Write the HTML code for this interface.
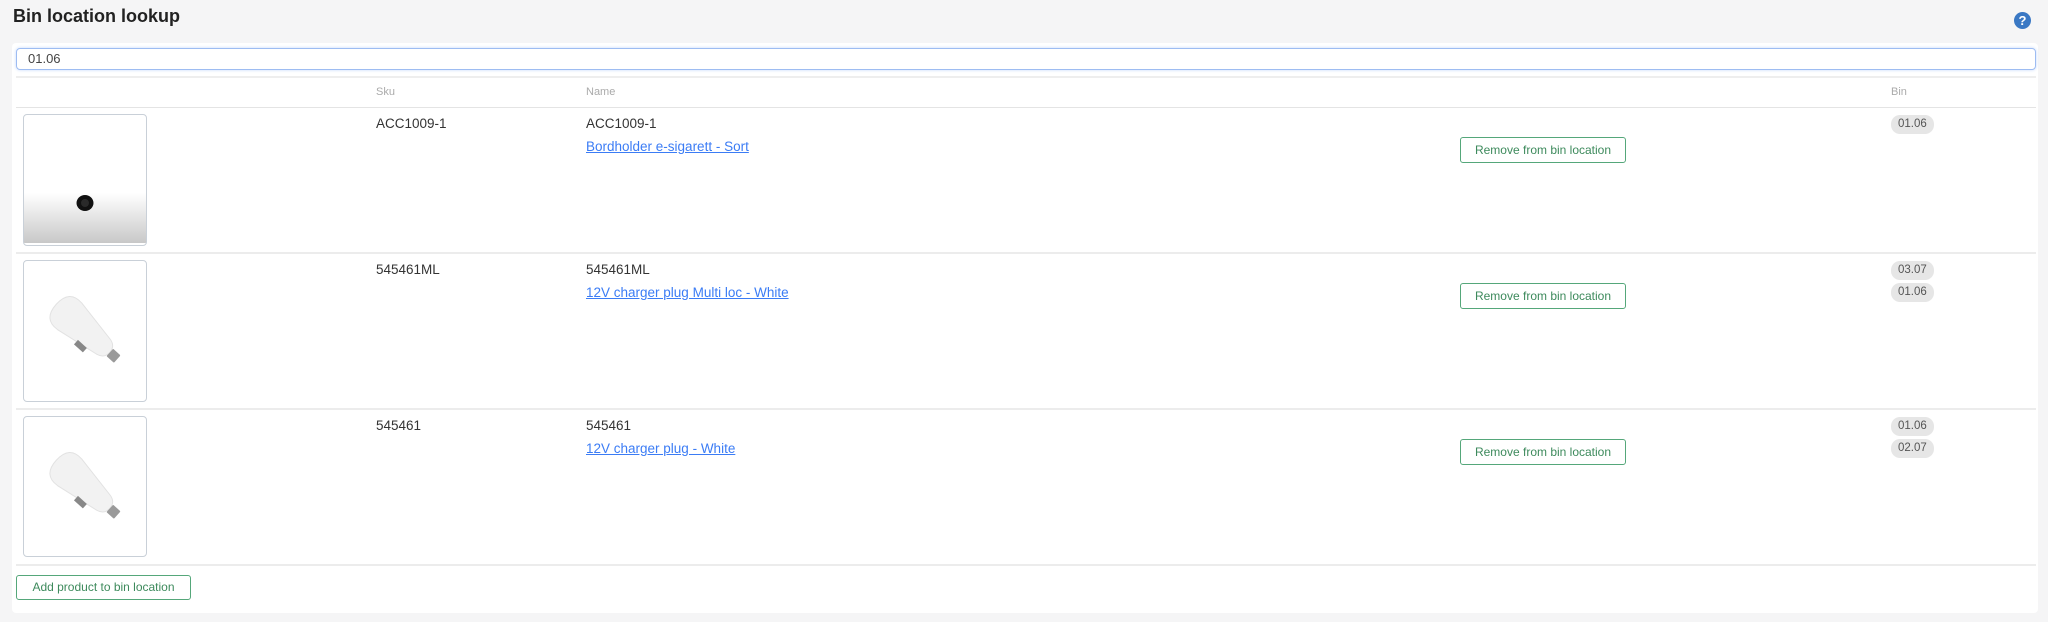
<!DOCTYPE html>
<html><head><meta charset="utf-8"><style>
*{box-sizing:border-box;margin:0;padding:0}
body{width:2048px;height:622px;background:#f5f5f6;font-family:"Liberation Sans",sans-serif;position:relative;overflow:hidden;color:#333}
.a{position:absolute}
.title{left:13px;top:6px;font-size:18px;font-weight:bold;color:#222}
.help{left:2014px;top:12px;width:17px;height:17px;border-radius:50%;background:#3a78c4;color:#fff;font-size:13px;font-weight:bold;text-align:center;line-height:17px}
.panel{left:12px;top:43px;width:2026px;height:570px;background:#fff;border-radius:4px}
.input{left:16px;top:48px;width:2020px;height:22px;border:1.5px solid #9dbcf2;border-radius:4px;box-shadow:0 0 3px #c5d8fb;font-size:13px;line-height:19px;padding-left:11px;color:#444}
.hl{left:16px;width:2020px;height:1px;background:#e4e4e4}
.th{font-size:11px;color:#aaa;top:86px}
.td{font-size:13.5px;color:#333}
.lk{font-size:13.5px;color:#3b7cf5;text-decoration:underline}
.img{left:23px;width:124px;border:1px solid #c9d0d8;border-radius:4px;background:#fff;overflow:hidden}
.btn{border:1px solid #55a77a;border-radius:3px;color:#3d8a5c;font-size:12px;text-align:center;background:#fff}
.rb{left:1460px;width:166px;height:26px;line-height:24px}
.bd{left:1891px;height:19px;line-height:19px;padding:0 7px;border-radius:9px;background:#e6e6e6;font-size:11.5px;color:#555}
</style></head><body>
<div class="a title">Bin location lookup</div>
<div class="a help">?</div>
<div class="a panel"></div>
<div class="a input">01.06</div>
<div class="a hl" style="top:76px;height:2px;background:#eee"></div>
<div class="a th" style="left:376px">Sku</div>
<div class="a th" style="left:586px">Name</div>
<div class="a th" style="left:1891px">Bin</div>
<div class="a hl" style="top:107px"></div>

<!-- row 1 -->
<div class="a img" style="top:114px;height:132px">
<svg width="124" height="132"><defs><linearGradient id="g" x1="0" y1="0" x2="0" y2="1"><stop offset="0" stop-color="#fff"/><stop offset="1" stop-color="#c8c8c8"/></linearGradient></defs><rect x="0" y="78" width="124" height="50" fill="url(#g)"/><ellipse cx="61" cy="88" rx="8.5" ry="8" fill="#111"/><circle cx="61" cy="88" r="4" fill="#2a2a2a"/></svg>
</div>
<div class="a td" style="left:376px;top:116px">ACC1009-1</div>
<div class="a td" style="left:586px;top:116px">ACC1009-1</div>
<div class="a lk" style="left:586px;top:139px">Bordholder e-sigarett - Sort</div>
<div class="a btn rb" style="top:137px">Remove from bin location</div>
<div class="a bd" style="top:115px">01.06</div>
<div class="a hl" style="top:252px;height:2px;background:#ececec"></div>

<!-- row 2 -->
<div class="a img" style="top:260px;height:142px">
<svg width="124" height="142"><g transform="rotate(42 62 70)"><path d="M22 70 Q22 50 40 52 L86 60 Q94 62 94 70 Q94 78 86 80 L40 88 Q22 90 22 70 Z" fill="#f2f2f2" stroke="#e2e2e2"/><rect x="94" y="65" width="10" height="10" rx="1" fill="#9a9a9a"/><rect x="62" y="82" width="12" height="6" fill="#888"/></g></svg>
</div>
<div class="a td" style="left:376px;top:262px">545461ML</div>
<div class="a td" style="left:586px;top:262px">545461ML</div>
<div class="a lk" style="left:586px;top:285px">12V charger plug Multi loc - White</div>
<div class="a btn rb" style="top:283px">Remove from bin location</div>
<div class="a bd" style="top:261px">03.07</div>
<div class="a bd" style="top:283px">01.06</div>
<div class="a hl" style="top:408px;height:2px;background:#ececec"></div>

<!-- row 3 -->
<div class="a img" style="top:416px;height:141px">
<svg width="124" height="141"><g transform="rotate(42 62 70)"><path d="M22 70 Q22 50 40 52 L86 60 Q94 62 94 70 Q94 78 86 80 L40 88 Q22 90 22 70 Z" fill="#f2f2f2" stroke="#e2e2e2"/><rect x="94" y="65" width="10" height="10" rx="1" fill="#9a9a9a"/><rect x="62" y="82" width="12" height="6" fill="#888"/></g></svg>
</div>
<div class="a td" style="left:376px;top:418px">545461</div>
<div class="a td" style="left:586px;top:418px">545461</div>
<div class="a lk" style="left:586px;top:441px">12V charger plug - White</div>
<div class="a btn rb" style="top:439px">Remove from bin location</div>
<div class="a bd" style="top:417px">01.06</div>
<div class="a bd" style="top:439px">02.07</div>
<div class="a hl" style="top:564px;height:2px;background:#ececec"></div>

<div class="a btn" style="left:16px;top:575px;width:175px;height:25px;line-height:23px">Add product to bin location</div>
</body></html>
